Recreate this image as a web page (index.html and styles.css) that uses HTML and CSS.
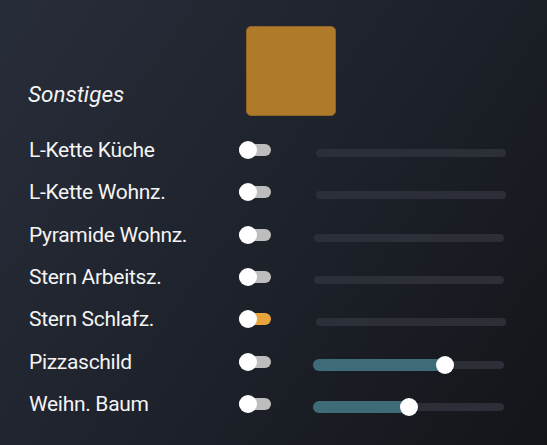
FILE: index.html
```html
<!DOCTYPE html>
<html>
<head>
<meta charset="utf-8">
<link rel="stylesheet" href="styles.css">
</head>
<body>
<div class="panel">
  <div class="header">
    <div class="title">Sonstiges</div>
    <div class="swatch"></div>
  </div>
  <div class="rows">
    <div class="row">
      <div class="label">L-Kette Küche</div>
      <div class="toggle"><span class="knob"></span></div>
      <div class="slider s1"><div class="track"></div></div>
    </div>
    <div class="row">
      <div class="label">L-Kette Wohnz.</div>
      <div class="toggle"><span class="knob"></span></div>
      <div class="slider s1"><div class="track"></div></div>
    </div>
    <div class="row">
      <div class="label">Pyramide Wohnz.</div>
      <div class="toggle"><span class="knob"></span></div>
      <div class="slider s2"><div class="track"></div></div>
    </div>
    <div class="row">
      <div class="label">Stern Arbeitsz.</div>
      <div class="toggle"><span class="knob"></span></div>
      <div class="slider s2"><div class="track"></div></div>
    </div>
    <div class="row">
      <div class="label">Stern Schlafz.</div>
      <div class="toggle on"><span class="knob"></span></div>
      <div class="slider s1"><div class="track"></div></div>
    </div>
    <div class="row">
      <div class="label">Pizzaschild</div>
      <div class="toggle"><span class="knob"></span></div>
      <div class="slider s3"><div class="track"><div class="fill" style="width:132px"><span class="thumb"></span></div></div></div>
    </div>
    <div class="row">
      <div class="label">Weihn. Baum</div>
      <div class="toggle"><span class="knob"></span></div>
      <div class="slider s3"><div class="track"><div class="fill" style="width:96px"><span class="thumb"></span></div></div></div>
    </div>
  </div>
</div>
</body>
</html>
```

FILE: styles.css
```css
html, body {
  margin: 0;
  padding: 0;
  width: 547px;
  height: 445px;
  overflow: hidden;
}
body {
  background: linear-gradient(125deg, #282d3a 0%, #1e222b 50%, #131519 100%);
  font-family: Roboto, "Noto Sans", sans-serif;
  color: #f4f4f4;
}
.panel {
  padding: 26px 0 0 29px;
}
.header {
  display: flex;
  align-items: flex-end;
  height: 90px;
}
.title {
  width: 218px;
  font-style: italic;
  font-size: 22.5px;
  line-height: 26px;
  margin-bottom: 9px;
  margin-left: -1px;
}
.swatch {
  width: 88px;
  height: 88px;
  background: #b07a2b;
  border: 1px solid #8e6428;
  border-radius: 5px;
}
.rows {
  display: flex;
  flex-direction: column;
  margin-top: 13px;
}
.row {
  display: grid;
  grid-template-columns: 210px 74px 193px;
  align-items: center;
  height: 42.3px;
}
.label {
  font-size: 21px;
  line-height: 26px;
  letter-spacing: -0.3px;
}
.toggle {
  position: relative;
  width: 32px;
  height: 12px;
  border-radius: 6px;
  background: #bdbdbd;
}
.toggle.on {
  background: #e9a43e;
}
.knob {
  position: absolute;
  left: 0;
  top: -3px;
  width: 18px;
  height: 18px;
  border-radius: 50%;
  background: #ffffff;
}
.slider {
  height: 12px;
  display: flex;
  align-items: center;
  margin-top: 6px;
}
.slider.s1 { padding-left: 3px; }
.slider.s2 { padding-left: 1px; margin-right: 2px; }
.slider.s3 { padding-left: 0; margin-right: 2px; margin-top: 7px; }
.track {
  flex: 1;
  height: 8px;
  border-radius: 4px;
  background: #2c2f37;
  position: relative;
  display: flex;
  align-items: center;
}
.fill {
  position: relative;
  height: 12px;
  border-radius: 6px;
  background: #3e6b78;
}
.thumb {
  position: absolute;
  right: -9px;
  top: -3px;
  width: 18px;
  height: 18px;
  border-radius: 50%;
  background: #ffffff;
}
```
